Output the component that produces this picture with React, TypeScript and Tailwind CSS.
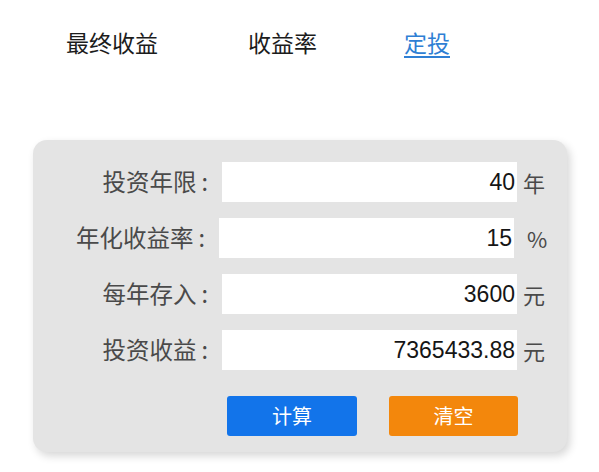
import React from "react";

const cjk = "font-['Noto_Sans_CJK_SC',sans-serif]";
const num = "font-['Liberation_Sans','Noto_Sans_CJK_SC',sans-serif]";

type Row = { label: string; value: string; unit: string; shift?: string; unitClass?: string };

const rows: Row[] = [
    { label: "投资年限", value: "40", unit: "年" },
    { label: "年化收益率", value: "15", unit: "%", shift: "-ml-[3px]", unitClass: "ml-[13px] text-[21px]" },
    { label: "每年存入", value: "3600", unit: "元" },
    { label: "投资收益", value: "7365433.88", unit: "元" },
];

function FieldRow({ row }: { row: Row }) {
    return (
        <div className={`flex items-center h-[40px] ${row.shift ?? ""}`}>
            {/* Label */}
            <div className={`w-[175px] text-right text-[23.5px] leading-none text-[#4a4a4a] ${cjk}`}>
                {row.label}
                <span className="ml-[5px]">:</span>
            </div>
            {/* Input */}
            <div className={`ml-[14px] w-[295px] h-[40px] bg-white flex items-center justify-end pr-[2px] text-[23px] text-[#151515] ${num}`}>
                {row.value}
            </div>
            {/* Unit */}
            <span className={`${row.unitClass ?? "ml-[6px]"} text-[22px] leading-none text-[#4a4a4a] ${cjk}`}>{row.unit}</span>
        </div>
    );
}

export default function App() {
    return (
        <div className="w-[599px] h-[472px] bg-white overflow-hidden">
            {/* Tabs */}
            <div className={`flex items-start pt-[28px] pl-[66px] h-[140px] text-[23px] leading-[28px] text-[#1c1c1c] ${cjk}`}>
                <span>最终收益</span>
                <span className="ml-[90px]">收益率</span>
                <span className="ml-[87px] text-[#2f7fd4] border-b-2 border-[#2f7fd4]">定投</span>
            </div>

            {/* Card */}
            <div className="ml-[33px] w-[534px] h-[312px] bg-[#e4e4e4] rounded-[14px] shadow-[3px_4px_8px_rgba(0,0,0,0.16)] pt-[22px]">
                <div className="flex flex-col gap-[16px]">
                    {rows.map((r) => (
                        <FieldRow key={r.label} row={r} />
                    ))}
                </div>

                {/* Buttons */}
                <div className={`flex gap-[32px] ml-[194px] mt-[26px] text-[20px] text-white ${cjk}`}>
                    <button className="w-[130px] h-[40px] rounded-[3px] bg-[#1274ea] flex items-center justify-center">计算</button>
                    <button className="w-[129px] h-[40px] rounded-[3px] bg-[#f3870c] flex items-center justify-center">清空</button>
                </div>
            </div>
        </div>
    );
}
